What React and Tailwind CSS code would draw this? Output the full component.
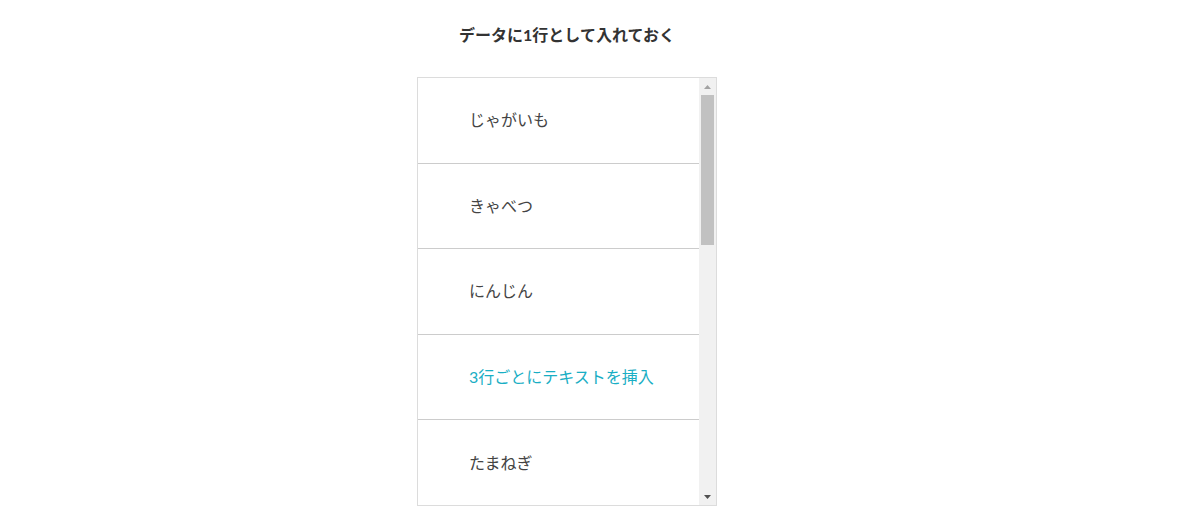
import React from 'react';

const items = [
    { label: 'じゃがいも' },
    { label: 'きゃべつ' },
    { label: 'にんじん' },
    { label: '3行ごとにテキストを挿入', ad: true },
    { label: 'たまねぎ' },
];

const App = () => {
    return (
        <div className="min-h-[532px] bg-white flex flex-col items-center pt-[24px] pr-[46px] font-['Lato','Noto_Sans_CJK_JP',sans-serif]">
            <h1 className="text-[16px] leading-[22px] font-bold text-[#333]">データに1行として入れておく</h1>

            {/* List box with a drawn scrollbar */}
            <div className="mt-[31px] w-[300px] h-[429px] border border-[#dcdcdc] flex overflow-hidden">
                <ul className="flex-1 overflow-hidden">
                    {items.map((it, i) => (
                        <li key={i} className={`h-[85.5px] flex items-center pl-[51px] ${i < items.length - 1 ? 'border-b border-[#cccccc]' : ''}`}>
                            <span className={`text-[16px] ${it.ad ? 'text-[#19aec4]' : 'text-[#444]'}`}>{it.label}</span>
                        </li>
                    ))}
                </ul>
                <div className="w-[17px] bg-[#f1f1f1] flex flex-col items-center">
                    <div className="h-[17px] flex items-center justify-center">
                        <svg width="7" height="4" viewBox="0 0 7 4"><path d="M0 4 L3.5 0 L7 4 Z" fill="#a3a3a3" /></svg>
                    </div>
                    <div className="w-[13px] h-[150px] bg-[#c1c1c1]" />
                    <div className="flex-1" />
                    <div className="h-[17px] flex items-center justify-center">
                        <svg width="7" height="4" viewBox="0 0 7 4"><path d="M0 0 L7 0 L3.5 4 Z" fill="#505050" /></svg>
                    </div>
                </div>
            </div>
        </div>
    );
};

export default App;
